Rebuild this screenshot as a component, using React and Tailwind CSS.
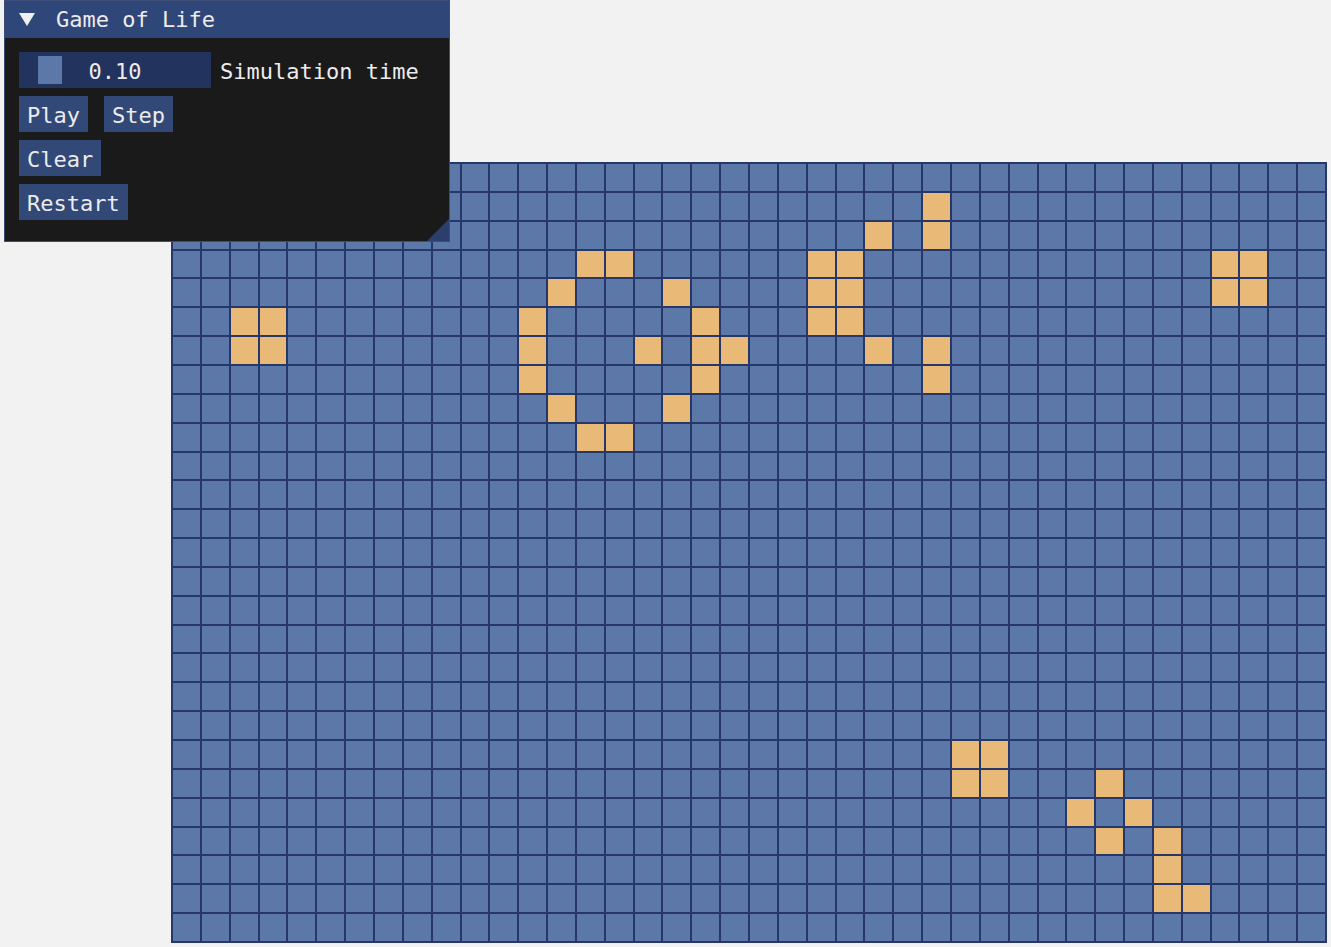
import React from "react";

const COLS = 40;
const ROWS = 27;
const ALIVE = new Set([
  "5,2","5,3","6,2","6,3",
  "3,14","3,15","4,13","4,17","5,12","5,18","6,12","6,16","6,18","6,19","7,12","7,18","8,13","8,17","9,14","9,15",
  "1,26","2,24","2,26","3,22","3,23","4,22","4,23","5,22","5,23","6,24","6,26","7,26",
  "3,36","3,37","4,36","4,37",
  "20,27","20,28","21,27","21,28","21,32","22,31","22,33","23,32","23,34","24,34","25,34","25,35",
]);

function Btn({ children }) {
  return (
    <div className="h-[36px] px-[8px] pt-[4px] flex items-center bg-[#324877] text-[#ececec]">
      {children}
    </div>
  );
}

export default function App() {
  const cells = [];
  for (let r = 0; r < ROWS; r++) {
    for (let c = 0; c < COLS; c++) {
      const alive = ALIVE.has(`${r},${c}`);
      cells.push(
        <div key={`${r}-${c}`} className={alive ? "bg-[#e9b978]" : "bg-[#5b78a8]"} />
      );
    }
  }
  return (
    <div className="relative w-[1331px] h-[947px] bg-[#f2f2f2] overflow-hidden">
      <div className="pt-[162px] pl-[171px]">
        <div
          className="w-[1156px] h-[781px] bg-[#26386a] p-[2px] grid gap-[2px]"
          style={{ gridTemplateColumns: `repeat(${COLS}, 1fr)`, gridTemplateRows: `repeat(${ROWS}, 1fr)` }}
        >
          {cells}
        </div>
      </div>

      <div
        className="absolute left-[4px] top-0 w-[446px] h-[242px] bg-[#1a1a1a] border border-[#3e4d75] flex flex-col text-[22px] leading-none text-[#ececec]"
        style={{ fontFamily: '"DejaVu Sans Mono", "Liberation Mono", monospace' }}
      >
        <div className="h-[37px] bg-[#2f4679] flex items-center pl-[13px] shrink-0">
          <svg width="18" height="15" viewBox="0 0 18 15" className="mr-[20px]">
            <polygon points="1,1 17,1 9,14" fill="#f0f0f0" />
          </svg>
          <span>Game of Life</span>
        </div>
        <div className="flex flex-col gap-[8px] pl-[14px] pt-[14px]">
          <div className="flex items-center gap-[9px]">
            <div className="relative w-[192px] h-[36px] bg-[#22335e] flex items-center justify-center">
              <div className="absolute left-[19px] top-[4px] w-[24px] h-[28px] bg-[#5b78a8]" />
              <span className="relative pt-[4px]">0.10</span>
            </div>
            <span className="pt-[4px]">Simulation time</span>
          </div>
          <div className="flex gap-[16px]">
            <Btn>Play</Btn>
            <Btn>Step</Btn>
          </div>
          <div className="flex">
            <Btn>Clear</Btn>
          </div>
          <div className="flex">
            <Btn>Restart</Btn>
          </div>
        </div>
        <svg width="22" height="22" viewBox="0 0 22 22" className="absolute right-0 bottom-0">
          <polygon points="22,0 22,22 0,22" fill="#2c3f6c" />
        </svg>
      </div>
    </div>
  );
}
